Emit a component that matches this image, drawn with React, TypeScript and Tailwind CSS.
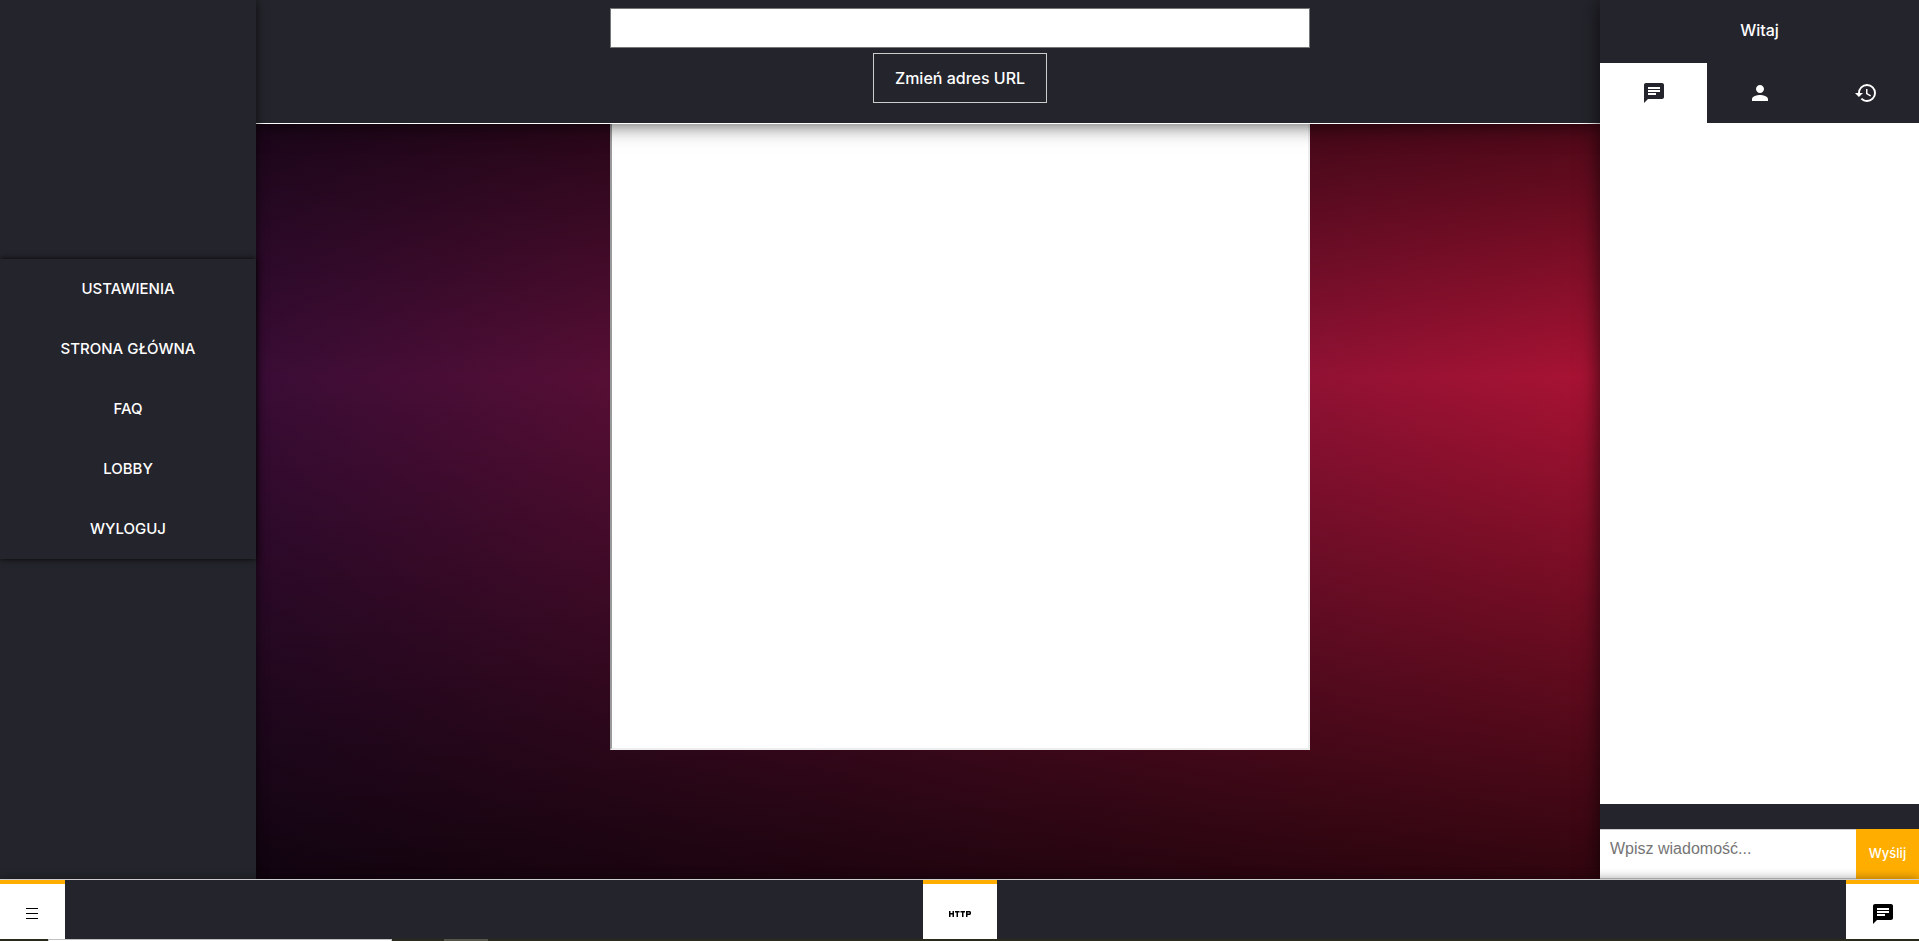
import { useState } from "react";
import { MdChat, MdHistory, MdHttp, MdPerson } from "react-icons/md";

const menuItems = ["Ustawienia", "Strona główna", "FAQ", "Lobby", "Wyloguj"];

const tabs = [
  { id: "chat", label: "Czat", Icon: MdChat },
  { id: "users", label: "Użytkownicy", Icon: MdPerson },
  { id: "history", label: "Historia", Icon: MdHistory },
];

function Sidebar() {
  return (
    <aside className="z-20 flex w-64 shrink-0 flex-col justify-center bg-[#24242c] pb-[61px] shadow-[0_0_10px_rgba(0,0,0,0.7)]">
      <nav className="shadow-[0_0_6px_rgba(0,0,0,0.9)]">
        <ul>
          {menuItems.map((item) => (
            <li key={item}>
              <a href="#" className="flex h-15 items-center justify-center text-[15px] font-medium uppercase text-white">
                {item}
              </a>
            </li>
          ))}
        </ul>
      </nav>
    </aside>
  );
}

function Player() {
  return (
    <main className="flex min-w-0 flex-1 flex-col">
      <header className="z-10 flex h-31 shrink-0 flex-col items-center gap-[5px] border-b border-white bg-[#24242c] pt-2 pl-16 shadow-[0_0_20px_rgba(0,0,0,0.7)]">
        <input
          type="text"
          aria-label="Adres URL"
          className="h-10 w-full max-w-[700px] border border-[#767676] bg-white px-2 text-base text-black outline-none"
        />
        <button type="button" className="h-[50px] border border-[#cccccc] px-[21px] text-base font-medium text-white">
          Zmień adres URL
        </button>
      </header>
      <div className="flex flex-1 justify-center pl-16">
        <section
          aria-label="Odtwarzacz"
          className="h-[626px] w-full max-w-[700px] border-2 border-t-0 border-[#eeeeee] border-l-[#9a9a9a] bg-white"
        />
      </div>
    </main>
  );
}

function Chat() {
  const [active, setActive] = useState("chat");
  return (
    <aside className="z-20 flex w-[319px] shrink-0 flex-col bg-[#24242c] shadow-[0_0_20px_rgba(0,0,0,0.7)]">
      <h2 className="flex h-[63px] shrink-0 items-center justify-center pb-1 text-base font-medium text-white">Witaj</h2>
      <div className="grid h-15 shrink-0 grid-cols-[107px_1fr_1fr]">
        {tabs.map(({ id, label, Icon }) => (
          <button
            key={id}
            type="button"
            aria-label={label}
            onClick={() => setActive(id)}
            className={
              active === id
                ? "flex items-center justify-center bg-white text-[#24242c]"
                : "flex items-center justify-center text-white"
            }
          >
            <Icon size={24} />
          </button>
        ))}
      </div>
      <div className="flex-1 bg-white" />
      <form className="mt-[25px] flex h-[50px] shrink-0" onSubmit={(e) => e.preventDefault()}>
        <textarea
          aria-label="Wiadomość"
          placeholder="Wpisz wiadomość..."
          className="min-w-0 flex-1 resize-none border-y border-[#cccccc] bg-white px-2.5 py-[7px] font-['Liberation_Sans',sans-serif] text-base text-black outline-none placeholder:text-[#757575]"
        />
        <button type="submit" className="w-[63px] bg-[#ffae00] text-[13px] font-medium text-white">
          Wyślij
        </button>
      </form>
    </aside>
  );
}

function BottomBar() {
  return (
    <footer className="z-30 flex h-15 shrink-0 items-stretch justify-between border-t border-[#cccccc] bg-[#24242c] text-black shadow-[0_0_10px_rgba(0,0,0,0.4)]">
      <div className="flex flex-1">
        <button type="button" aria-label="Menu" className="flex w-[65px] items-center justify-center border-t-4 border-[#ffae00] bg-white pt-1">
          <svg width="13" height="11" viewBox="0 0 13 11" shapeRendering="crispEdges" aria-hidden="true">
            <path d="M0 0h12v1H0zM0 5h12v1H0zM0 10h12v1H0z" fill="currentColor" />
          </svg>
        </button>
      </div>
      <button type="button" aria-label="HTTP" className="flex w-[74px] items-center justify-center border-t-4 border-[#ffae00] bg-white pt-1">
        <MdHttp size={24} />
      </button>
      <div className="flex flex-1 justify-end">
        <button type="button" aria-label="Czat" className="flex w-[73px] items-center justify-center border-t-4 border-[#ffae00] bg-white pt-1">
          <MdChat size={24} />
        </button>
      </div>
    </footer>
  );
}

export default function App() {
  return (
    <div className="flex min-h-screen flex-col bg-[linear-gradient(to_bottom,rgba(0,0,0,0.8),transparent_40%,rgba(0,0,0,0.8)),linear-gradient(to_right,#240b36,#c31432)] font-['Inter','Noto_Sans',sans-serif]">
      <div className="flex flex-1">
        <Sidebar />
        <Player />
        <Chat />
      </div>
      <BottomBar />
      <div className="z-30 flex h-0.5 shrink-0 bg-[#2b2b1d]">
        <div className="ml-12 w-86 border-x border-t border-[#c0c0c0] bg-white" />
        <div className="ml-13 w-11 bg-[#555548]" />
      </div>
    </div>
  );
}
